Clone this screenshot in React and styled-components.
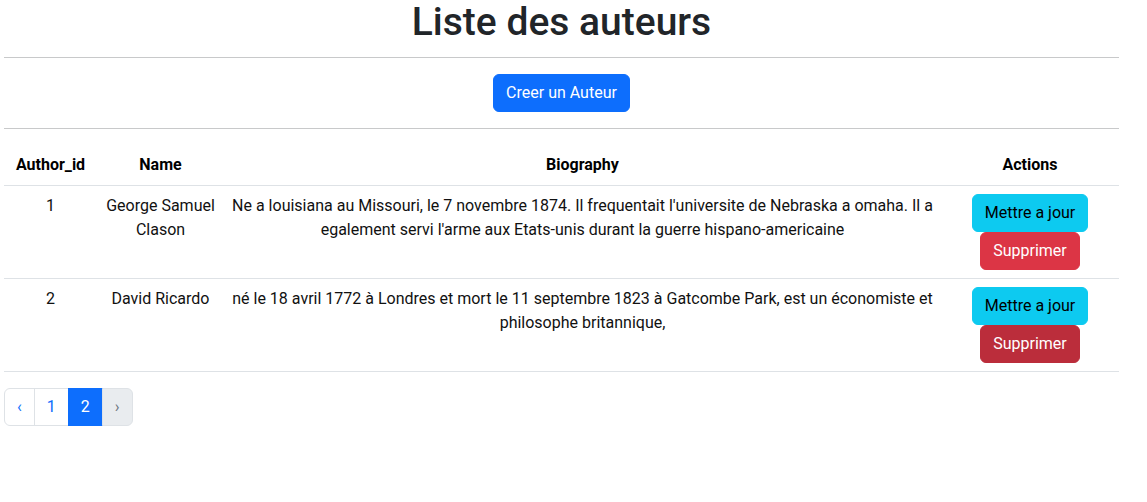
import styled, { createGlobalStyle } from 'styled-components';

const GlobalStyle = createGlobalStyle`
  body {
    margin: 0;
    background: #fff;
    color: #212529;
    font-family: Roboto, "Liberation Sans", sans-serif;
    font-size: 16px;
    line-height: 1.5;
  }
`;

const authors = [
  {
    id: 1,
    name: 'George Samuel Clason',
    bio: "Ne a louisiana au Missouri, le 7 novembre 1874. Il frequentait l'universite de Nebraska a omaha. Il a egalement servi l'arme aux Etats-unis durant la guerre hispano-americaine",
  },
  {
    id: 2,
    name: 'David Ricardo',
    bio: 'né le 18 avril 1772 à Londres et mort le 11 septembre 1823 à Gatcombe Park, est un économiste et philosophe britannique,',
    hover: true,
  },
];

const App = () => {
  return (
    <>
      <GlobalStyle />
      <StPage>
        <StTitle>Liste des auteurs</StTitle>
        <StRule $top={13} />
        <StCreateRow>
          <StButton $variant="primary">Creer un Auteur</StButton>
        </StCreateRow>
        <StRule $top={16} />
        <StTable>
          <colgroup>
            <col style={{ width: 93 }} />
            <col style={{ width: 127 }} />
            <col />
            <col style={{ width: 178 }} />
          </colgroup>
          <thead>
            <tr>
              <StHead>Author_id</StHead>
              <StHead>Name</StHead>
              <StHead>Biography</StHead>
              <StHead>Actions</StHead>
            </tr>
          </thead>
          <tbody>
            {authors.map((a) => (
              <tr key={a.id}>
                <StCell>{a.id}</StCell>
                <StCell>{a.name}</StCell>
                <StCell>{a.bio}</StCell>
                <StCell>
                  <StActions>
                    <StButton $variant="info">Mettre a jour</StButton>
                    <StButton $variant={a.hover ? 'dangerHover' : 'danger'}>Supprimer</StButton>
                  </StActions>
                </StCell>
              </tr>
            ))}
          </tbody>
        </StTable>
        <StPagination>
          <StPageItem>‹</StPageItem>
          <StPageItem>1</StPageItem>
          <StPageItem $active>2</StPageItem>
          <StPageItem $disabled>›</StPageItem>
        </StPagination>
      </StPage>
    </>
  );
};

export default App;

// Styled-components
const variants = {
  primary: { bg: '#0d6efd', fg: '#fff' },
  info: { bg: '#0dcaf0', fg: '#000' },
  danger: { bg: '#dc3545', fg: '#fff' },
  dangerHover: { bg: '#bb2d3b', fg: '#fff' },
};

const StPage = styled.div`
  width: 1115px;
  margin-left: 4px;
`;

const StTitle = styled.h1`
  margin: 0;
  text-align: center;
  font-size: 39px;
  font-weight: 500;
  line-height: 44px;
`;

const StRule = styled.hr`
  margin: ${({ $top }) => $top}px 0 16px;
  border: 0;
  border-top: 1px solid #c8c9ca;
`;

const StCreateRow = styled.div`
  display: flex;
  justify-content: center;
`;

const StButton = styled.button`
  font-family: inherit;
  font-size: 16px;
  line-height: 24px;
  padding: 6px 12px;
  border: 1px solid ${({ $variant }) => variants[$variant].bg};
  border-radius: 6px;
  background: ${({ $variant }) => variants[$variant].bg};
  color: ${({ $variant }) => variants[$variant].fg};
  cursor: pointer;
`;

const StTable = styled.table`
  width: 100%;
  margin-top: 16px;
  border-collapse: collapse;
  table-layout: fixed;
  text-align: center;
  color: #111;
`;

const StHead = styled.th`
  padding: 8px;
  font-weight: 700;
  color: #000;
  border-bottom: 1px solid #dee2e6;
`;

const StCell = styled.td`
  padding: 8px;
  vertical-align: top;
  border-bottom: 1px solid #dee2e6;
`;

const StActions = styled.div`
  display: flex;
  flex-direction: column;
  align-items: center;
`;

const StPagination = styled.ul`
  display: inline-flex;
  margin: 16px 0 0;
  padding: 0;
  list-style: none;
`;

const StPageItem = styled.li`
  padding: 6px 12px;
  line-height: 24px;
  font-size: 16px;
  margin-left: -1px;
  border: 1px solid ${({ $active }) => ($active ? '#0d6efd' : '#dee2e6')};
  background: ${({ $active, $disabled }) => ($active ? '#0d6efd' : $disabled ? '#e9ecef' : '#fff')};
  color: ${({ $active, $disabled }) => ($active ? '#fff' : $disabled ? '#6c757d' : '#0d6efd')};

  &:first-child {
    margin-left: 0;
    border-radius: 6px 0 0 6px;
  }

  &:last-child {
    border-radius: 0 6px 6px 0;
  }
`;
